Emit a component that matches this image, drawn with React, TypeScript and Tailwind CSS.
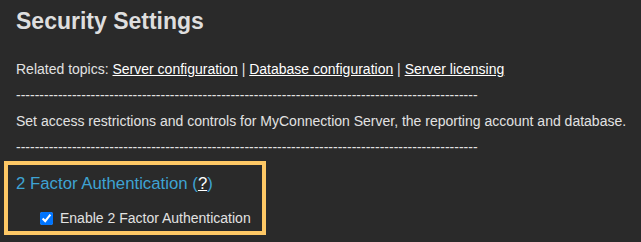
import { useState } from 'react';

const DASHES = '-'.repeat(99);

export default function App() {
  const [enabled, setEnabled] = useState(true);

  return (
    <div className="min-h-screen bg-[#2a2a2a] font-['Liberation_Sans',Arial,sans-serif] text-[14px] text-[#e2e2e2]">
      <h1 className="pl-4 pt-[7px] text-[23px] font-bold leading-[28px] text-[#dedede]">Security Settings</h1>

      <div className="mt-[21px] pl-4 leading-[26px]">
        <p>
          Related topics:{' '}
          <a href="#" className="text-white underline">
            Server configuration
          </a>{' '}
          |{' '}
          <a href="#" className="text-white underline">
            Database configuration
          </a>{' '}
          |{' '}
          <a href="#" className="text-white underline">
            Server licensing
          </a>
        </p>
        <p className="whitespace-nowrap">{DASHES}</p>
        <p>Set access restrictions and controls for MyConnection Server, the reporting account and database.</p>
        <p className="whitespace-nowrap">{DASHES}</p>
      </div>

      <div className="ml-1 mt-px w-[262px] border-4 border-[#fec865] pb-[5px] pl-2 pt-[9px]">
        <h2 className="text-[16.8px] leading-[20px] text-[#3ea3d3]">
          2 Factor Authentication (
          <a href="#" className="text-white underline">
            ?
          </a>
          )
        </h2>
        <label className="mt-4 flex h-4 items-center gap-[7px] pl-6 leading-4">
          <input
            type="checkbox"
            checked={enabled}
            onChange={(e) => setEnabled(e.target.checked)}
            className="h-[13px] w-[13px]"
          />
          Enable 2 Factor Authentication
        </label>
      </div>
    </div>
  );
}
